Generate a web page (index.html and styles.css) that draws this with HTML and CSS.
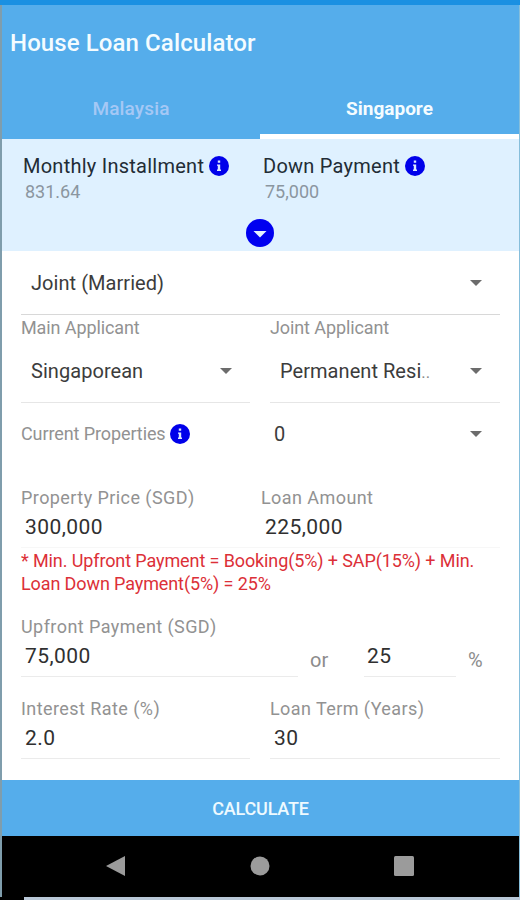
FILE: index.html
```html
<!DOCTYPE html>
<html lang="en">

<head>
    <meta charset="UTF-8">
    <title>House Loan Calculator</title>
    <link rel="stylesheet" href="styles.css">
</head>

<body>
    <div class="screen">
        <div class="status-bar"></div>
        <div class="navbar">
            <h1>House Loan Calculator</h1>
        </div>
        <div class="tabs">
            <a class="tab">Malaysia</a>
            <a class="tab active">Singapore</a>
        </div>

        <div class="summary">
            <div class="summary-row">
                <div class="summary-item">
                    <h2>Monthly Installment
                        <svg class="info" viewBox="0 0 20 20"><circle cx="10" cy="10" r="10"/><path d="M8.800 4.500h2.400v2.200H8.800zM8 8.400h3.200v5.200h.8V15H8v-1.400h.8V9.800H8z"/></svg>
                    </h2>
                    <p>831.64</p>
                </div>
                <div class="summary-item">
                    <h2>Down Payment
                        <svg class="info" viewBox="0 0 20 20"><circle cx="10" cy="10" r="10"/><path d="M8.800 4.500h2.400v2.200H8.800zM8 8.400h3.200v5.200h.8V15H8v-1.400h.8V9.800H8z"/></svg>
                    </h2>
                    <p>75,000</p>
                </div>
            </div>
            <svg class="expand" viewBox="0 0 28 28"><circle cx="14" cy="14" r="14" fill="#0000f0"/><path d="M7.500 12h13L14 18.500z" fill="#e4f2ff"/></svg>
        </div>

        <form class="form">
            <div class="select type">
                <span>Joint (Married)</span><i class="arrow"></i>
            </div>

            <div class="row applicants">
                <div>
                    <label>Main Applicant</label>
                    <div class="select"><span>Singaporean</span><i class="arrow"></i></div>
                </div>
                <div>
                    <label>Joint Applicant</label>
                    <div class="select"><span>Permanent Resi<small>..</small></span><i class="arrow"></i></div>
                </div>
            </div>

            <div class="row properties">
                <div class="with-info">
                    <label>Current Properties</label>
                    <svg class="info" viewBox="0 0 20 20"><circle cx="10" cy="10" r="10"/><path d="M8.800 4.500h2.400v2.200H8.800zM8 8.400h3.200v5.200h.8V15H8v-1.400h.8V9.800H8z"/></svg>
                </div>
                <div class="select"><span>0</span><i class="arrow"></i></div>
            </div>

            <div class="row price">
                <div>
                    <label for="price">Property Price (SGD)</label>
                    <input type="text" id="price" value="300,000">
                </div>
                <div>
                    <label for="loan">Loan Amount</label>
                    <input type="text" id="loan" value="225,000">
                </div>
            </div>

            <p class="warning">* Min. Upfront Payment = Booking(5%) + SAP(15%) + Min.<br>Loan Down Payment(5%) = 25%</p>

            <div class="upfront">
                <label for="upfront">Upfront Payment (SGD)</label>
                <div class="upfront-row">
                    <input type="text" id="upfront" value="75,000">
                    <span class="or">or</span>
                    <input type="text" id="percent" value="25">
                    <span class="unit">%</span>
                </div>
            </div>

            <div class="row terms">
                <div>
                    <label for="rate">Interest Rate (%)</label>
                    <input type="text" id="rate" value="2.0">
                </div>
                <div>
                    <label for="term">Loan Term (Years)</label>
                    <input type="text" id="term" value="30">
                </div>
            </div>
        </form>

        <button class="submit-button" type="button">CALCULATE</button>

        <div class="system-nav">
            <svg viewBox="0 0 20 20"><path d="M1 10L20 0v20z"/></svg>
            <svg viewBox="0 0 20 20"><circle cx="10" cy="10" r="9.500"/></svg>
            <svg viewBox="0 0 20 20"><rect width="20" height="20" rx="1.500"/></svg>
        </div>
    </div>
    <div class="bottom-edge"></div>
</body>

</html>
```
FILE: styles.css
```css
* {
    box-sizing: border-box;
}

body {
    margin: 0;
    width: 520px;
    height: 900px;
    overflow: hidden;
    background-color: #fff;
    font-family: Roboto, sans-serif;
    color: #333;
}

h1, h2, p {
    margin: 0;
    font-weight: 400;
}

.screen {
    display: flex;
    flex-direction: column;
    height: 897px;
    border-left: 2px solid #7f9dac;
    border-right: 1px solid #86bedb;
}

.status-bar {
    height: 5px;
    margin: 0 -1px 0 -2px;
    background-color: #1a90e2;
}

.navbar {
    height: 75px;
    padding-left: 8px;
    background-color: #55adeb;
}

.navbar h1 {
    color: #f4fcff;
    font-size: 24px;
    font-weight: 500;
    line-height: 76px;
    letter-spacing: 0.1px;
}

.tabs {
    display: flex;
    height: 59px;
    background-color: #55adeb;
}

.tab {
    width: 258px;
    line-height: 57px;
    text-align: center;
    font-size: 19px;
    font-weight: 500;
    letter-spacing: 0.15px;
    color: #a5c8f5;
}

.tab.active {
    flex: 1;
    border-bottom: 5px solid #fff;
    color: #f4fcff;
    font-weight: 700;
    letter-spacing: 0;
}

.summary {
    height: 112px;
    background-color: #dff1ff;
    text-align: center;
}

.summary-row {
    display: grid;
    grid-template-columns: 240px 1fr;
    padding: 13px 0 0 21px;
    text-align: left;
}

.summary h2 {
    display: flex;
    align-items: center;
    gap: 5px;
    height: 28px;
    font-size: 20px;
    letter-spacing: 0.25px;
    color: #222c35;
}

.summary p {
    padding-left: 2px;
    font-size: 18px;
    line-height: 24px;
    color: #8b969f;
}

.info {
    width: 20px;
    height: 20px;
}

.info circle {
    fill: #0000ea;
}

.info path {
    fill: #dde8ff;
}

.expand {
    width: 28px;
    height: 28px;
    margin: 15px 1px 0 0;
}

.form {
    flex: 1;
    padding: 0 19px;
}

.select {
    display: flex;
    align-items: center;
    justify-content: space-between;
    height: 62px;
    padding: 0 18px 2px 10px;
    border-bottom: 1px solid #e6e6e6;
    font-size: 20px;
    letter-spacing: 0.05px;
    color: #3c3c3c;
}

.select small {
    color: #888;
}

.select.type {
    height: 64px;
    padding-bottom: 0;
    border-color: #d8d8d8;
}

.arrow {
    border: 6px solid transparent;
    border-top-color: #6c6c6c;
    border-bottom: 0;
}

.row {
    display: grid;
    grid-template-columns: 229px 230px;
    column-gap: 20px;
}

label {
    display: block;
    font-size: 18px;
    line-height: 25px;
    letter-spacing: 0.43px;
    color: #929292;
}

.applicants label,
.properties label {
    line-height: 26px;
    letter-spacing: -0.1px;
}

.with-info {
    display: flex;
    align-items: center;
    gap: 4px;
}

.properties .select {
    padding: 0 18px 0 4px;
    border-bottom: 0;
}

input {
    display: block;
    width: 100%;
    height: 38px;
    padding: 0 0 3px 4px;
    border: 0;
    border-bottom: 1px solid #ebebeb;
    background: none;
    outline: 0;
    font-family: inherit;
    font-size: 21px;
    letter-spacing: 0.45px;
    color: #303030;
}

.price {
    grid-template-columns: 240px 239px;
    column-gap: 0;
    padding-top: 20px;
}

.price input {
    border-color: #f7f7f7;
}

.warning {
    margin-top: 1px;
    font-size: 18px;
    line-height: 23px;
    letter-spacing: -0.11px;
    white-space: nowrap;
    color: #dc3038;
}

.upfront {
    margin-top: 19px;
}

.upfront-row {
    display: flex;
    height: 38px;
}

#upfront {
    width: 277px;
}

#percent {
    width: 92px;
    padding-left: 3px;
}

.or,
.unit {
    font-size: 20px;
    line-height: 43px;
    color: #8c8c8c;
}

.or {
    width: 66px;
    padding-left: 12px;
}

.unit {
    padding-left: 12px;
}

.terms {
    margin-top: 19px;
}

.submit-button {
    height: 56px;
    padding: 0;
    border: 0;
    background-color: #55adeb;
    font-family: inherit;
    font-size: 18px;
    font-weight: 500;
    letter-spacing: -0.2px;
    color: #eefaff;
}

.system-nav {
    display: flex;
    justify-content: space-between;
    align-items: center;
    height: 61px;
    padding: 0 105px 1px 103px;
    background-color: #000;
}

.system-nav svg {
    width: 20px;
    height: 20px;
    fill: #9b9b9b;
}

.bottom-edge {
    height: 3px;
    border-left: 24px solid #000;
    background-color: #b9c8d8;
}
```
